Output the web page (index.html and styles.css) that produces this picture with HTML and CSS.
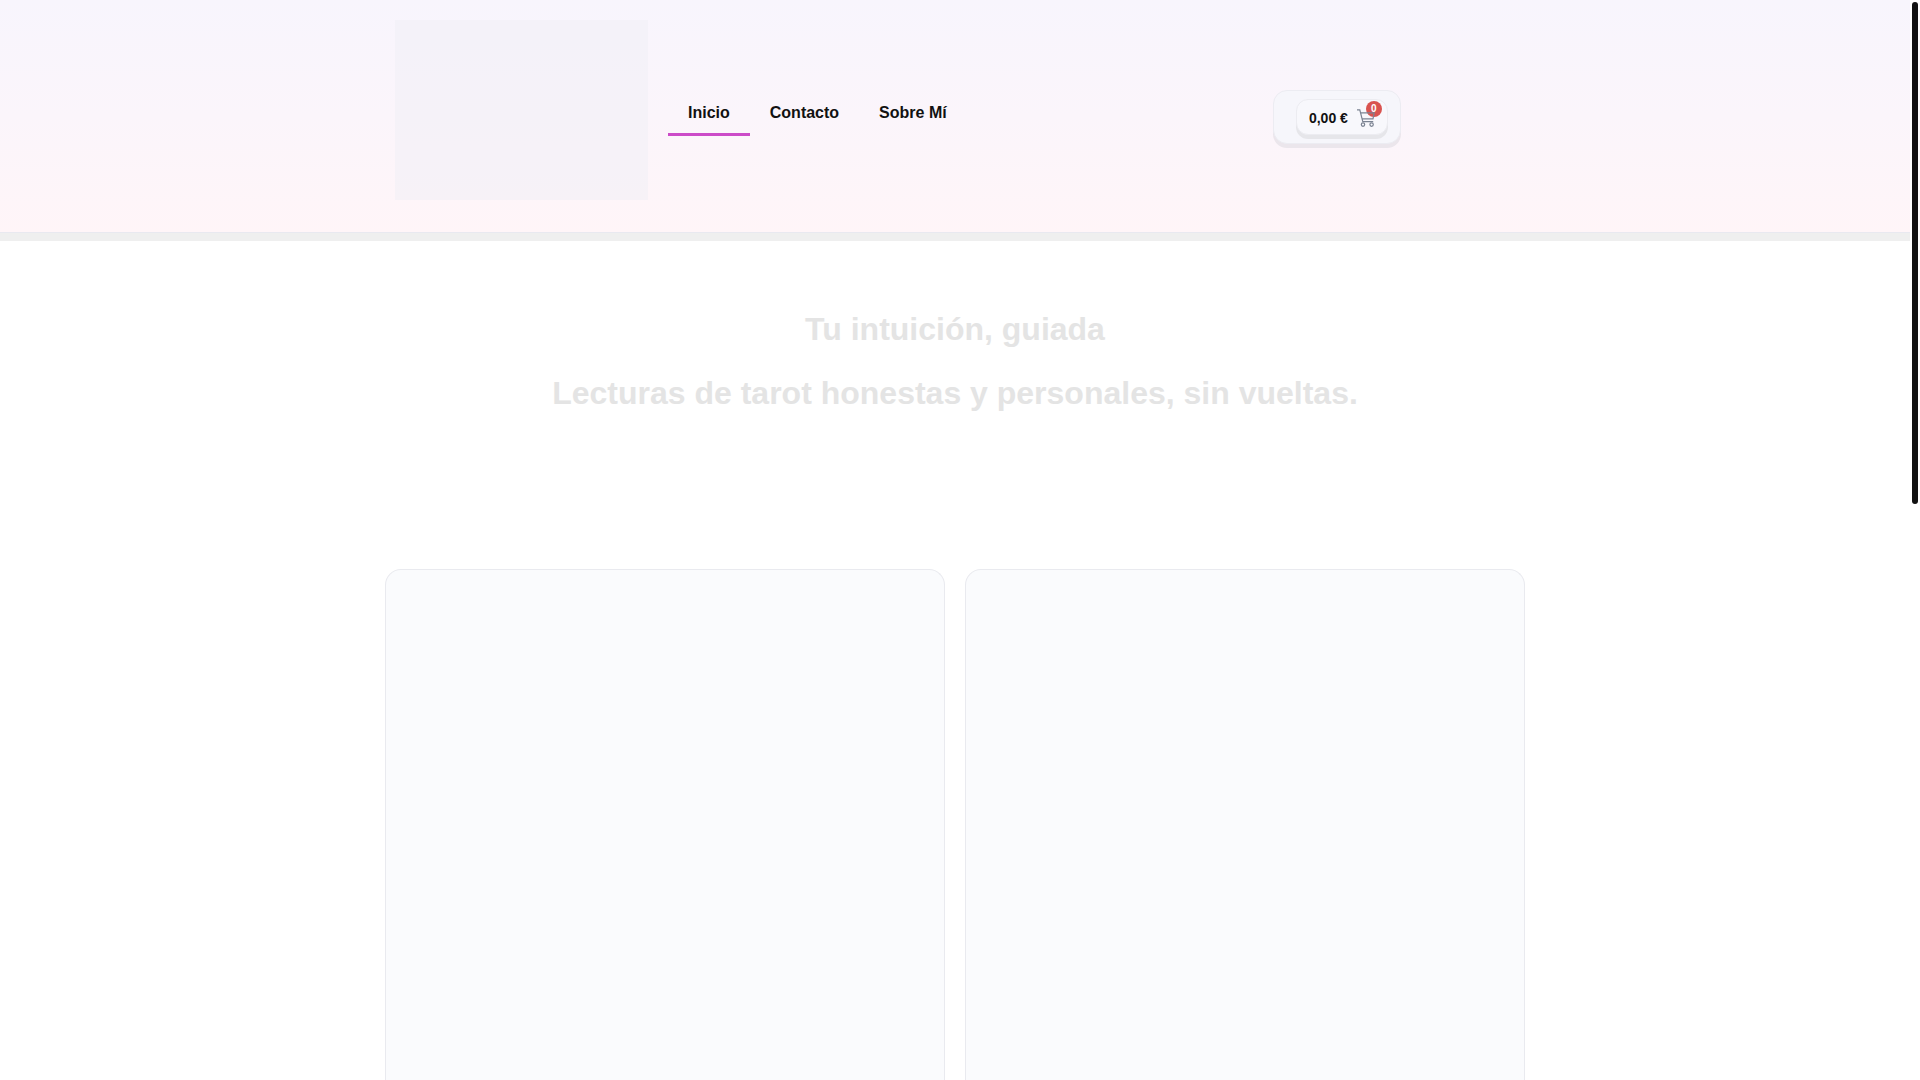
FILE: index.html
```html
<!DOCTYPE html>
<html lang="es">
<head>
    <meta charset="UTF-8">
    <meta name="viewport" content="width=device-width, initial-scale=1.0">
    <title>Inicio</title>
    <link rel="stylesheet" href="styles.css">
</head>
<body>
    <header class="site-header">
        <div class="container header-inner">
            <div class="logo-col">
                <div class="logo"></div>
            </div>
            <nav class="main-nav">
                <a class="active" href="#">Inicio</a>
                <a href="#contacto">Contacto</a>
                <a href="#sobre-mi">Sobre Mí</a>
            </nav>
            <div class="cart-col">
                <div class="cart-box">
                    <button type="button" class="cart-button">
                        <span>0,00 €</span>
                        <span class="cart-icon">
                            <span class="cart-count">0</span>
                            <svg viewBox="0 0 18 18" width="18" height="18">
                                <path d="M0 .8h2.8l3 11.8h10.4M3.6 3.8h13.6l-1.2 6H5.2"/>
                                <circle cx="6" cy="15.6" r="1.7"/>
                                <circle cx="14.6" cy="15.6" r="1.7"/>
                            </svg>
                        </span>
                    </button>
                </div>
            </div>
        </div>
    </header>

    <main class="container">
        <section class="hero">
            <h1>Tu intuición, guiada</h1>
            <h2>Lecturas de tarot honestas y personales, sin vueltas.</h2>
        </section>
        <section class="cards">
            <div class="card"></div>
            <div class="card"></div>
        </section>
    </main>

    <!-- barra de desplazamiento -->
    <div class="scroll-thumb"></div>
</body>
</html>
```
FILE: styles.css
```css
* {
    box-sizing: border-box;
}

body {
    display: flex;
    flex-direction: column;
    height: 100vh;
    margin: 0;
    padding-right: 10px;
    overflow: hidden;
    background-color: #ffffff;
    color: #111111;
    font-family: "Liberation Sans", Arial, sans-serif;
}

.container {
    width: 100%;
    max-width: 1140px;
    margin: 0 auto;
}

.site-header {
    padding: 20px 0 32px;
    background: linear-gradient(#f8f5fd, #fbf5fb 50%, #fff5f8);
    border-bottom: 1px solid #e9e9f0;
    box-shadow: 0 8px 0 #efefef;
}

.header-inner {
    display: flex;
}

.logo-col {
    width: 273px;
    padding: 0 10px;
}

.logo {
    height: 180px;
    background-color: rgba(240, 240, 245, 0.5);
}

.main-nav {
    display: flex;
    align-items: flex-start;
    flex: 1;
    padding: 69px 10px 0;
}

.main-nav a {
    padding: 15px 20px 11px;
    border-bottom: 3px solid transparent;
    color: #111111;
    font-size: 16px;
    font-weight: bold;
    line-height: 18px;
    text-decoration: none;
}

.main-nav a.active {
    border-bottom-color: #cc4bc8;
}

.cart-col {
    display: flex;
    justify-content: center;
    align-items: flex-start;
    width: 33%;
    padding-top: 70px;
}

.cart-box {
    padding: 8px 12px 8px 22px;
    background-color: #f6f6fb;
    border: 1px solid #ececf2;
    border-radius: 14px;
    box-shadow: 0 4px 0 #ebe6ec;
}

.cart-button {
    display: flex;
    align-items: center;
    gap: 9px;
    height: 36px;
    padding: 1px 12px 0;
    background-color: #f8f8fc;
    border: 1px solid #ececf1;
    border-radius: 12px;
    box-shadow: 0 4px 0 #e6e6ea;
    color: #111111;
    font-family: inherit;
    font-size: 14px;
    font-weight: bold;
    cursor: pointer;
}

.cart-icon {
    position: relative;
    width: 18px;
    height: 18px;
}

.cart-icon svg {
    position: relative;
    display: block;
    fill: none;
    stroke: #7b8392;
    stroke-width: 1.2;
}

.cart-count {
    position: absolute;
    top: -8px;
    right: -7px;
    width: 16px;
    height: 16px;
    border-radius: 50%;
    background-color: #d9534f;
    color: #ffffff;
    font-size: 10px;
    line-height: 15px;
    text-align: center;
}

main.container {
    display: flex;
    flex-direction: column;
    flex: 1;
}

.hero {
    padding: 78px 0 130px;
    text-align: center;
}

.hero h1,
.hero h2 {
    margin: 0 0 28px;
    color: #e4e4e4;
    font-size: 32px;
    line-height: 36px;
}

.cards {
    display: flex;
    flex: 1;
    gap: 20px;
}

.card {
    flex: 1;
    background-color: #fafbfd;
    border: 1px solid #e9eaef;
    border-bottom: none;
    border-radius: 16px 16px 0 0;
}

.scroll-thumb {
    position: fixed;
    top: 2px;
    right: 2px;
    width: 6px;
    height: 502px;
    border-radius: 3px;
    background-color: #111111;
}
```
